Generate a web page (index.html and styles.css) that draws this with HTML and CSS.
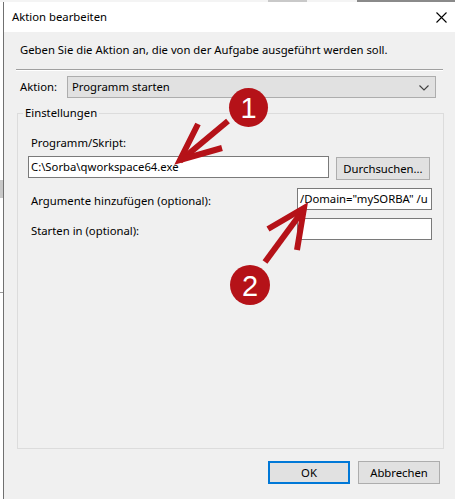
FILE: index.html
```html
<!DOCTYPE html>
<html lang="de">
<head>
<meta charset="utf-8">
<title>Aktion bearbeiten</title>
<link rel="stylesheet" href="styles.css">
</head>
<body>
<div class="screen">
  <div class="topstrip"></div>
  <div class="row">
    <div class="leftstrip"></div>
    <div class="dialog">
      <div class="titlebar">
        <span class="title">Aktion bearbeiten</span>
        <svg class="close" width="11" height="11" viewBox="0 0 11 11"><path d="M0.5 0.5 L10.5 10.5 M10.5 0.5 L0.5 10.5" stroke="#000" stroke-width="1.1" fill="none"/></svg>
      </div>
      <div class="body">
        <p class="intro">Geben Sie die Aktion an, die von der Aufgabe ausgeführt werden soll.</p>
        <div class="sep"></div>
        <div class="action-row">
          <span class="label">Aktion:</span>
          <div class="select">
            <span>Programm starten</span>
            <svg class="chev" width="10" height="6" viewBox="0 0 10 6"><path d="M0.5 0.5 L5 5 L9.5 0.5" stroke="#404040" stroke-width="1.1" fill="none"/></svg>
          </div>
        </div>
        <fieldset class="group">
          <legend>Einstellungen</legend>
          <div class="field-label">Programm/Skript:</div>
          <div class="prog-row">
            <div class="input wide">C:\Sorba\qworkspace64.exe</div>
            <div class="btn browse">Durchsuchen...</div>
          </div>
          <div class="line-row first">
            <span class="row-label">Argumente hinzufügen (optional):</span>
            <div class="input small">/Domain="mySORBA" /u</div>
          </div>
          <div class="line-row">
            <span class="row-label">Starten in (optional):</span>
            <div class="input small"></div>
          </div>
        </fieldset>
        <div class="buttons">
          <div class="btn ok">OK</div>
          <div class="btn">Abbrechen</div>
        </div>
      </div>
    </div>
  </div>
  <svg class="annot" width="455" height="499" viewBox="0 0 455 499">
    <g stroke="#b51218" stroke-width="6" fill="none" stroke-linecap="butt" stroke-linejoin="miter">
      <path d="M228 121 L180 161"/>
      <path d="M198 124 L180 160 L222 148"/>
      <path d="M265 262 L304 209"/>
      <path d="M268 229 L304 208 L297 250"/>
    </g>
    <circle cx="248.5" cy="107.5" r="19.5" fill="#b51218"/>
    <circle cx="250" cy="285" r="20" fill="#b51218"/>
    <text x="248.5" y="118" class="num">1</text>
    <text x="250" y="296" class="num">2</text>
  </svg>
</div>
</body>
</html>
```
FILE: styles.css
```css
* { box-sizing: border-box; }
html, body { margin: 0; padding: 0; }
body {
  width: 455px;
  height: 499px;
  overflow: hidden;
  font-family: "Noto Sans", "Liberation Sans", sans-serif;
  font-size: 11.3px;
  line-height: 16px;
  color: #000;
  background: #fff;
}
.screen {
  position: relative;
  width: 455px;
  height: 499px;
  overflow: hidden;
}
.topstrip {
  height: 2px;
  background: linear-gradient(to right, #f4f4f4 0, #f4f4f4 268px, #c9c9c9 268px, #c9c9c9 307px, #f4f4f4 307px, #f4f4f4 357px, #8a8a8a 357px);
}
.row {
  display: flex;
  height: 497px;
}
.leftstrip {
  width: 3px;
  flex: none;
  background: linear-gradient(to bottom, #fff 0, #fff 178px, #c8c8c8 178px, #c8c8c8 196px, #fff 196px, #fff 290px, #9a9a9a 290px, #9a9a9a 291px, #fff 291px);
}
.dialog {
  width: 470px;
  flex: none;
  border-left: 1px solid #707070;
  background: #f0f0f0;
  display: flex;
  flex-direction: column;
}
.titlebar {
  height: 30px;
  background: #fff;
  display: flex;
  align-items: center;
  padding-left: 8px;
  position: relative;
}
.close {
  position: absolute;
  left: 432px;
  top: 10px;
}
.body {
  flex: 1;
  padding-top: 10px;
}
.intro {
  margin: 0 0 0 16px;
  height: 16px;
  white-space: nowrap;
}
.sep {
  margin: 11px 0 0 12px;
  width: 427px;
  height: 2px;
  border-top: 1px solid #a0a0a0;
  border-bottom: 1px solid #fff;
}
.action-row {
  display: flex;
  align-items: center;
  margin-top: 5px;
  height: 22px;
}
.action-row .label {
  margin-left: 16px;
  width: 47px;
}
.select {
  width: 369px;
  height: 22px;
  background: #e1e1e1;
  border: 1px solid #adadad;
  display: flex;
  align-items: center;
  justify-content: space-between;
  padding: 0 6px 0 4px;
}
.chev { margin-top: 1px; }
.group {
  margin: 7px 0 0 13px;
  width: 427px;
  height: 344px;
  padding: 0;
  border: 1px solid #dcdcdc;
  min-width: 0;
}
.group legend {
  margin-left: 5px;
  padding: 0 2px;
  line-height: 16px;
}
.field-label {
  margin: 14px 0 0 13px;
  height: 16px;
}
.prog-row {
  display: flex;
  align-items: flex-start;
  margin: 5px 0 0 10px;
}
.input {
  height: 22px;
  background: #fff;
  border: 1px solid #7a7a7a;
  padding: 0 2px;
  line-height: 20px;
  white-space: nowrap;
  overflow: hidden;
}
.input.wide { width: 301px; }
.input.small { width: 135px; }
.btn {
  height: 23px;
  width: 82px;
  background: #e1e1e1;
  border: 1px solid #adadad;
  display: flex;
  align-items: center;
  justify-content: center;
  white-space: nowrap;
}
.browse {
  width: 94px;
  margin: 1px 0 0 7px;
}
.line-row {
  display: flex;
  align-items: center;
  justify-content: space-between;
  margin: 8px 11px 0 13px;
  height: 22px;
}
.line-row.first { margin-top: 8px; }
.row-label { padding-top: 3px; }
.buttons {
  display: flex;
  gap: 8px;
  margin: 12px 0 0 264px;
}
.btn.ok {
  border: 2px solid #0078d7;
}
.annot {
  position: absolute;
  left: 0;
  top: 0;
  pointer-events: none;
}
.num {
  fill: #fff;
  font-family: "Liberation Sans", Arial, sans-serif;
  font-size: 29px;
  text-anchor: middle;
}
```
